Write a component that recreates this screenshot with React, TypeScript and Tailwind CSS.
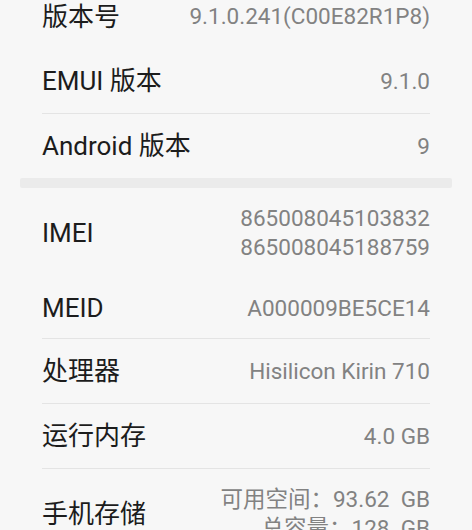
import React from 'react';

type Row = {
  label: string;
  values: string[];
  height: number;
  divider?: boolean;
};

const topRows: Row[] = [
  { label: '版本号', values: ['9.1.0.241(C00E82R1P8)'], height: 65 },
  { label: 'EMUI 版本', values: ['9.1.0'], height: 64, divider: true },
  { label: 'Android 版本', values: ['9'], height: 64 },
];

const bottomRows: Row[] = [
  { label: 'IMEI', values: ['865008045103832', '865008045188759'], height: 90 },
  { label: 'MEID', values: ['A000009BE5CE14'], height: 60, divider: true },
  { label: '处理器', values: ['Hisilicon Kirin 710'], height: 64, divider: true },
  { label: '运行内存', values: ['4.0 GB'], height: 64, divider: true },
  { label: '手机存储', values: ['可用空间：93.62  GB', '总容量：128  GB'], height: 90 },
];

const font = { fontFamily: 'Roboto, "Noto Sans CJK SC", sans-serif' };

function InfoRow({ row }: { row: Row }) {
  return (
    <div className={row.divider ? 'border-b border-[#e4e4e4]' : ''}>
      <div className="flex items-center justify-between" style={{ height: row.height }}>
        <span className="text-[26px] text-[#1c1c1c] leading-none">{row.label}</span>
        <div className="flex flex-col items-end text-[22.5px] text-[#828282] leading-[29px]">
          {row.values.map((v, i) => (
            <span key={i} className="whitespace-pre">{v}</span>
          ))}
        </div>
      </div>
    </div>
  );
}

export default function App() {
  return (
    <div className="w-[472px] h-[530px] overflow-hidden bg-[#f7f7f7]" style={font}>
      <div className="-mt-[16px] px-[42px]">
        {topRows.map((r) => (
          <InfoRow key={r.label} row={r} />
        ))}
      </div>
      {/* section separator */}
      <div className="mx-[20px] h-[10px] bg-[#ebebeb] rounded-[2px]" />
      <div className="px-[42px]">
        {bottomRows.map((r) => (
          <InfoRow key={r.label} row={r} />
        ))}
      </div>
    </div>
  );
}
